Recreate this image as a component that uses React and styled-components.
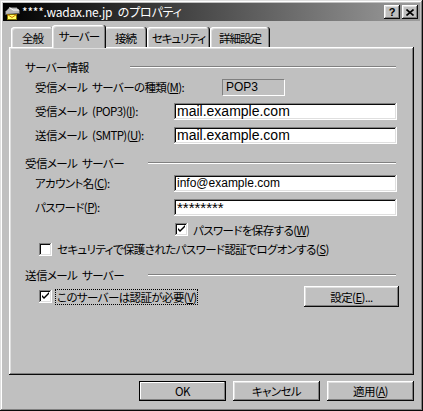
import React from "react";
import styled, { createGlobalStyle, css } from "styled-components";

const GlobalStyle = createGlobalStyle`
  html, body {
    margin: 0;
    padding: 0;
    background: #c0c0c0;
  }
  * {
    box-sizing: border-box;
  }
`;

const jp = css`
  font-family: "Noto Sans CJK JP", "Noto Sans", sans-serif;
  font-size: 11.5px;
  letter-spacing: -0.6px;
  word-spacing: 3px;
  font-feature-settings: "palt";
  color: #000000;
`;

const raised = css`
  box-shadow: inset -1px -1px #0a0a0a, inset 1px 1px #ffffff,
    inset -2px -2px #808080, inset 2px 2px #dfdfdf;
`;

const sunken = css`
  box-shadow: inset -1px -1px #ffffff, inset 1px 1px #808080,
    inset -2px -2px #dfdfdf, inset 2px 2px #0a0a0a;
`;

const tabs = [
  { label: "全般", width: 43 },
  { label: "サーバー", width: 50, active: true },
  { label: "接続", width: 43 },
  { label: "セキュリティ", width: 63 },
  { label: "詳細設定", width: 60 },
];

function MailIcon() {
  return (
    <svg width="16" height="16" viewBox="0 0 16 16">
      <path d="M1.5 7.5 L5.5 3.5 H12.5 L15.5 6.5 V9.5 L1.5 10.5 Z" fill="#b8b8b8" stroke="#505050" />
      <path d="M5.5 3.5 L9 6 H15" fill="none" stroke="#ffffff" />
      <rect x="3.5" y="10.5" width="9" height="5" fill="#ffff66" stroke="#807000" />
      <path d="M3.5 10.5 L8 13.5 L12.5 10.5" fill="none" stroke="#d07000" />
    </svg>
  );
}

function Check() {
  return (
    <svg width="9" height="9" viewBox="0 0 9 9">
      <path d="M1 3 V5 L3 7 L8 2 V0 L3 5 Z" fill="#000000" />
    </svg>
  );
}

function CheckField({ checked, focused, children }) {
  return (
    <>
      <CheckBox>{checked && <Check />}</CheckBox>
      <CheckLabel $focused={focused}>{children}</CheckLabel>
    </>
  );
}

export default function App() {
  return (
    <>
      <GlobalStyle />
      <Window>
        <TitleBar>
          <MailIcon />
          <TitleText>****.wadax.ne.jp のプロパティ</TitleText>
          <CaptionButton>
            <HelpMark>?</HelpMark>
          </CaptionButton>
          <CaptionButton $gap>
            <svg width="8" height="7" viewBox="0 0 8 7">
              <path d="M0.5 0.5 L7.5 6.5 M7.5 0.5 L0.5 6.5" stroke="#000" strokeWidth="1.6" />
            </svg>
          </CaptionButton>
        </TitleBar>

        <Body>
          <TabStrip>
            {tabs.map((t) => (
              <Tab key={t.label} $width={t.width} $active={t.active}>
                {t.label}
              </Tab>
            ))}
          </TabStrip>

          <Panel>
            <GroupHeader>
              <GroupTitle $width={105}>サーバー情報</GroupTitle>
              <Rule />
            </GroupHeader>
            <FieldRow $height={24}>
              <FieldLabel>
                受信メール サーバーの種類(<u>M</u>):
              </FieldLabel>
              <StaticBox>POP3</StaticBox>
            </FieldRow>
            <FieldRow $height={24}>
              <FieldLabel>
                受信メール (POP3)(<u>I</u>):
              </FieldLabel>
              <TextBox $size={14}>mail.example.com</TextBox>
            </FieldRow>
            <FieldRow $height={24}>
              <FieldLabel>
                送信メール (SMTP)(<u>U</u>):
              </FieldLabel>
              <TextBox $size={14}>mail.example.com</TextBox>
            </FieldRow>

            <GroupHeader $top={8}>
              <GroupTitle $width={123}>受信メール サーバー</GroupTitle>
              <Rule />
            </GroupHeader>
            <FieldRow $height={24}>
              <FieldLabel>
                アカウント名(<u>C</u>):
              </FieldLabel>
              <TextBox>info@example.com</TextBox>
            </FieldRow>
            <FieldRow $height={24}>
              <FieldLabel>
                パスワード(<u>P</u>):
              </FieldLabel>
              <TextBox $size={15}>********</TextBox>
            </FieldRow>
            <CheckRow $height={21} $indent={150}>
              <CheckField checked>
                パスワードを保存する(<u>W</u>)
              </CheckField>
            </CheckRow>
            <CheckRow $height={18} $indent={14}>
              <CheckField>
                セキュリティで保護されたパスワード認証でログオンする(<u>S</u>)
              </CheckField>
            </CheckRow>

            <GroupHeader $top={9}>
              <GroupTitle $width={123}>送信メール サーバー</GroupTitle>
              <Rule />
            </GroupHeader>
            <CheckRow $height={27} $indent={14}>
              <CheckField checked focused>
                このサーバーは認証が必要(<u>V</u>)
              </CheckField>
              <Button $width={95} $height={21} $push>
                設定(<u>E</u>)...
              </Button>
            </CheckRow>
          </Panel>

          <Footer>
            <Button $default>OK</Button>
            <Button>キャンセル</Button>
            <Button>
              適用(<u>A</u>)
            </Button>
          </Footer>
        </Body>
      </Window>
    </>
  );
}

const Window = styled.div`
  width: 423px;
  height: 411px;
  padding: 3px;
  background: #c0c0c0;
  display: flex;
  flex-direction: column;
  box-shadow: inset -1px -1px #0a0a0a, inset 1px 1px #dfdfdf,
    inset -2px -2px #808080, inset 2px 2px #ffffff;
  ${jp}
`;

const TitleBar = styled.div`
  height: 18px;
  padding: 0 2px 0 1px;
  display: flex;
  align-items: center;
  background: linear-gradient(to right, #000000, #9c9c9c);
  svg {
    flex-shrink: 0;
  }
`;

const TitleText = styled.div`
  flex: 1;
  margin-left: 2px;
  color: #ffffff;
  font-size: 12px;
  letter-spacing: -0.2px;
  white-space: nowrap;
  line-height: 18px;
`;

const CaptionButton = styled.div`
  width: 16px;
  height: 14px;
  margin-left: ${(p) => (p.$gap ? "2px" : "0")};
  background: #c0c0c0;
  display: flex;
  align-items: center;
  justify-content: center;
  ${raised}
`;

const HelpMark = styled.span`
  font-family: "Liberation Sans", Arial, sans-serif;
  font-weight: 700;
  font-size: 11px;
  letter-spacing: 0;
  line-height: 11px;
  margin-top: 1px;
`;

const Body = styled.div`
  flex: 1;
  padding: 4px 6px 7px;
  display: flex;
  flex-direction: column;
`;

const TabStrip = styled.div`
  height: 22px;
  padding-left: 2px;
  display: flex;
  align-items: flex-end;
`;

const Tab = styled.div`
  position: relative;
  flex-shrink: 0;
  width: ${(p) => p.$width + (p.$active ? 4 : 0)}px;
  height: ${(p) => (p.$active ? 23 : 20)}px;
  margin: ${(p) => (p.$active ? "0 -2px -1px" : "0")};
  z-index: ${(p) => (p.$active ? 1 : 0)};
  padding-top: 4px;
  display: flex;
  justify-content: center;
  white-space: nowrap;
  background: #c0c0c0;
  border-radius: 3px 3px 0 0;
  box-shadow: inset -1px 0 #0a0a0a, inset 1px 1px #ffffff,
    inset -2px 0 #808080, inset 2px 2px #dfdfdf;
  letter-spacing: -1px;
  line-height: 14px;
`;

const Panel = styled.div`
  height: 328px;
  padding: 12px 17px 0 16px;
  display: flex;
  flex-direction: column;
  background: #c0c0c0;
  ${raised}
`;

const GroupHeader = styled.div`
  height: 16px;
  margin-top: ${(p) => p.$top || 0}px;
  display: flex;
  align-items: center;
`;

const GroupTitle = styled.div`
  width: ${(p) => p.$width}px;
  flex-shrink: 0;
  white-space: nowrap;
`;

const Rule = styled.div`
  flex: 1;
  height: 2px;
  margin-right: 1px;
  border-top: 1px solid #808080;
  border-bottom: 1px solid #ffffff;
`;

const FieldRow = styled.div`
  height: ${(p) => p.$height}px;
  padding-left: 10px;
  display: flex;
  align-items: center;
`;

const FieldLabel = styled.div`
  width: 139px;
  flex-shrink: 0;
  white-space: nowrap;
`;

const TextBox = styled.div`
  width: 223px;
  height: 17px;
  padding: 0 3px;
  display: flex;
  align-items: center;
  background: #ffffff;
  font-family: "Liberation Sans", Arial, sans-serif;
  font-size: ${(p) => p.$size || 12}px;
  letter-spacing: 0;
  ${sunken}
`;

const StaticBox = styled.div`
  width: 63px;
  height: 17px;
  margin-left: 48px;
  padding: 0 3px;
  display: flex;
  align-items: center;
  border: 1px solid;
  border-color: #808080 #ffffff #ffffff #808080;
  font-family: "Liberation Sans", Arial, sans-serif;
  font-size: 12px;
  letter-spacing: 0;
`;

const CheckRow = styled.div`
  height: ${(p) => p.$height}px;
  padding-left: ${(p) => p.$indent}px;
  display: flex;
  align-items: center;
`;

const CheckBox = styled.div`
  width: 13px;
  height: 13px;
  flex-shrink: 0;
  margin-right: 3px;
  background: #ffffff;
  display: flex;
  align-items: center;
  justify-content: center;
  ${sunken}
`;

const CheckLabel = styled.div`
  padding: 0 1px;
  line-height: 14px;
  white-space: nowrap;
  border: 1px dotted ${(p) => (p.$focused ? "#000000" : "transparent")};
`;

const Footer = styled.div`
  height: 20px;
  margin-top: 6px;
  display: flex;
  justify-content: flex-end;
  gap: 7px;
`;

const Button = styled.div`
  width: ${(p) => p.$width || 87}px;
  height: ${(p) => p.$height || 20}px;
  margin-left: ${(p) => (p.$push ? "auto" : "0")};
  margin-right: ${(p) => (p.$push ? "-2px" : "0")};
  display: flex;
  align-items: center;
  justify-content: center;
  white-space: nowrap;
  background: #c0c0c0;
  ${(p) =>
    p.$default
      ? css`
          box-shadow: inset 0 0 0 1px #000000, inset -2px -2px #808080,
            inset 2px 2px #ffffff;
        `
      : raised}
`;
